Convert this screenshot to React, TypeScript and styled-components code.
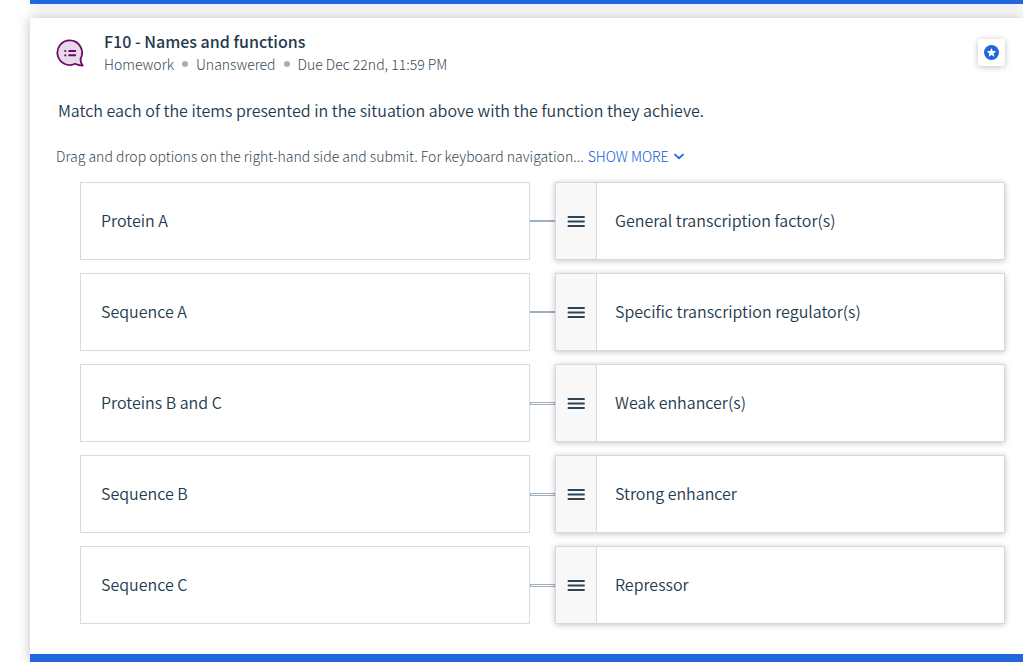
import React from "react";
import styled, { createGlobalStyle } from "styled-components";

const GlobalStyle = createGlobalStyle`
  *, *::before, *::after { box-sizing: border-box; }
  body {
    margin: 0;
    background: #fff;
    color: #233a4e;
    font-family: "Noto Sans CJK SC", "Noto Sans", sans-serif;
    font-size: 16px;
    font-weight: 350;
    line-height: 24px;
  }
  h2, p, ul { margin: 0; padding: 0; }
`;

const Page = styled.main`
  padding-left: 30px;
  overflow: hidden;
`;

const PreviousCard = styled.div`
  height: 4px;
  margin-bottom: 14px;
  background: #2066dc;
  box-shadow: 0 0 12px rgba(0, 0, 0, 0.25);
`;

const Card = styled.article`
  position: relative;
  background: #fff;
  border-bottom: 8px solid #2066dc;
  box-shadow: 0 0 12px rgba(0, 0, 0, 0.25);
`;

const Header = styled.header`
  display: flex;
  align-items: flex-start;
  padding: 12px 18px 0 26px;
`;

const TypeIcon = styled.svg`
  flex: none;
  width: 28px;
  height: 28px;
  margin: 9px 20px 0 0;
`;

const Heading = styled.div`
  flex: 1;
`;

const Title = styled.h2`
  font-size: 16px;
  line-height: 22px;
  font-weight: 500;
`;

const Meta = styled.ul`
  display: flex;
  align-items: center;
  list-style: none;
  font-size: 14px;
  font-weight: 300;
  line-height: 24px;
  color: #374955;
`;

const MetaItem = styled.li`
  display: flex;
  align-items: center;

  & + &::before {
    content: "";
    width: 6px;
    height: 6px;
    margin: 0 8px;
    border-radius: 50%;
    background: #9fafbb;
  }
`;

const StarButton = styled.button`
  display: flex;
  align-items: center;
  justify-content: center;
  width: 27px;
  height: 27px;
  margin-top: 9px;
  padding: 0;
  border: 0;
  border-radius: 3px;
  background: #fff;
  box-shadow: 0 1px 6px rgba(0, 0, 0, 0.25);
  cursor: pointer;
`;

const Question = styled.p`
  padding: 22px 28px 0;
`;

const Instructions = styled.div`
  display: flex;
  align-items: center;
  gap: 4px;
  padding: 23px 26px 0;
  font-size: 14px;
  font-weight: 300;
  line-height: 22px;
  color: #374955;
`;

const ShowMore = styled.button`
  display: flex;
  align-items: center;
  gap: 4px;
  padding: 0;
  border: 0;
  background: none;
  color: #1058d6;
  font: inherit;
  cursor: pointer;
`;

const Matches = styled.ul`
  display: grid;
  gap: 13px;
  padding: 15px 18px 30px 50px;
  list-style: none;
`;

const Match = styled.li`
  display: grid;
  grid-template-columns: 1fr 25px 1fr;
  align-items: center;
  min-height: 78px;
`;

const Prompt = styled.div`
  display: flex;
  align-items: center;
  align-self: stretch;
  padding: 0 20px 2px;
  border: 1px solid #d9dbe0;
`;

const Connector = styled.span<{ $hollow: boolean }>`
  height: ${(p) => (p.$hollow ? 3 : 2)}px;
  border: 1px solid #9fafbb;
  background: #fff;
`;

const Option = styled.div`
  display: flex;
  align-self: stretch;
  align-items: center;
  border: 1px solid #d5d8dd;
  background: #fff;
  box-shadow: 0 1px 6px rgba(0, 0, 0, 0.24);
`;

const OptionText = styled.span`
  padding-bottom: 2px;
`;

const Handle = styled.button`
  display: flex;
  align-items: center;
  justify-content: center;
  align-self: stretch;
  width: 41px;
  margin-right: 18px;
  padding: 0;
  border: 0;
  border-right: 1px solid #d9dbe0;
  background: #f8f8f8;
  color: #2d4356;
  cursor: grab;
`;

const pairs = [
  { prompt: "Protein A", option: "General transcription factor(s)", hollow: false },
  { prompt: "Sequence A", option: "Specific transcription regulator(s)", hollow: false },
  { prompt: "Proteins B and C", option: "Weak enhancer(s)", hollow: true },
  { prompt: "Sequence B", option: "Strong enhancer", hollow: true },
  { prompt: "Sequence C", option: "Repressor", hollow: true },
];

export default function App() {
  return (
    <>
      <GlobalStyle />
      <Page>
        <PreviousCard />
        <Card>
          <Header>
            <TypeIcon viewBox="0 0 28 28" aria-hidden="true">
              <path
                d="M13.7 1.4A12.3 12.3 0 1 0 19 24.8c2.6 1.2 5 1.8 7.6 1.8-1.6-2-2.1-4.2-2.1-6.9A12.3 12.3 0 0 0 13.7 1.4Z"
                fill="#e9d8e9"
                stroke="#6b0869"
                strokeWidth="1.8"
                strokeLinejoin="round"
              />
              <path d="M13.2 12h6M13.2 16.3h6" stroke="#6b0869" strokeWidth="2" strokeLinecap="round" />
              <circle cx="9.3" cy="12" r="1.1" fill="#6b0869" />
              <circle cx="9.3" cy="16.3" r="1.1" fill="#6b0869" />
            </TypeIcon>
            <Heading>
              <Title>F10 - Names and functions</Title>
              <Meta>
                <MetaItem>Homework</MetaItem>
                <MetaItem>Unanswered</MetaItem>
                <MetaItem>Due Dec 22nd, 11:59 PM</MetaItem>
              </Meta>
            </Heading>
            <StarButton aria-label="Bookmark question">
              <svg width="15" height="15" viewBox="0 0 15 15" aria-hidden="true">
                <circle cx="7.5" cy="7.5" r="7.5" fill="#2066dc" />
                <path
                  d="m7.5 2.9 1.4 3 3.2.4-2.4 2.2.7 3.2-2.9-1.6-2.9 1.6.7-3.2-2.4-2.2 3.2-.4Z"
                  fill="#fff"
                />
              </svg>
            </StarButton>
          </Header>
          <Question>
            Match each of the items presented in the situation above with the function they achieve.
          </Question>
          <Instructions>
            <span>Drag and drop options on the right-hand side and submit. For keyboard navigation...</span>
            <ShowMore>
              SHOW MORE
              <svg width="12" height="8" viewBox="0 0 12 8" aria-hidden="true">
                <path d="m1.5 2.2 4.5 4 4.5-4" fill="none" stroke="#2066dc" strokeWidth="1.8" />
              </svg>
            </ShowMore>
          </Instructions>
          <Matches>
            {pairs.map((pair) => (
              <Match key={pair.prompt}>
                <Prompt>{pair.prompt}</Prompt>
                <Connector $hollow={pair.hollow} />
                <Option>
                  <Handle aria-label={`Move ${pair.option}`}>
                    <svg width="18" height="13" viewBox="0 0 18 13" aria-hidden="true">
                      <path
                        d="M1.5 2h15.5M1.5 6.5h15.5M1.5 11h15.5"
                        stroke="currentColor"
                        strokeWidth="1.9"
                        strokeLinecap="round"
                      />
                    </svg>
                  </Handle>
                  <OptionText>{pair.option}</OptionText>
                </Option>
              </Match>
            ))}
          </Matches>
        </Card>
      </Page>
    </>
  );
}
